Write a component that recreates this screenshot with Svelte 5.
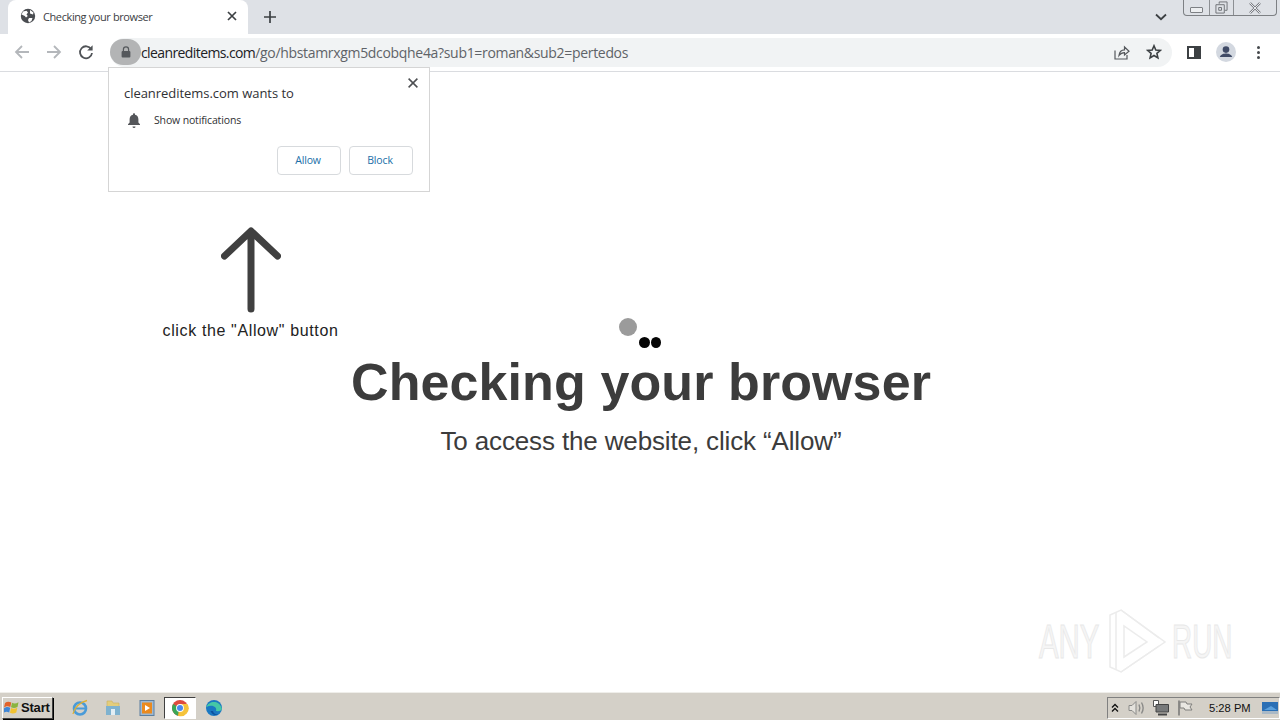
<script>
    let url = { host: "cleanreditems.com", rest: "/go/hbstamrxgm5dcobqhe4a?sub1=roman&sub2=pertedos" };
</script>

<div class="screen">
    <div class="tabstrip">
        <div class="tab">
            <svg class="globe" viewBox="0 0 16 16" width="16" height="16">
                <circle cx="8" cy="8" r="7.2" fill="#4a4d51" />
                <path d="M3 3.5 6.5 2.8 8 4.5 6.5 6.5 7.8 8 6 9.5 4.8 8 1.6 6.5ZM9 10h3.5l-1 3-2.5 1.5-1-2.5ZM10 2l3.5 2.5-.5 2-3-1Z" fill="#fff" />
            </svg>
            <span class="tab-title">Checking your browser</span>
            <svg class="tab-x" viewBox="0 0 10 10" width="10" height="10">
                <path d="M1 1 9 9M9 1 1 9" stroke="#3c4043" stroke-width="1.7" />
            </svg>
        </div>
        <svg class="plus" viewBox="0 0 12 12" width="12" height="12">
            <path d="M6 0V12M0 6H12" stroke="#3c4043" stroke-width="1.7" />
        </svg>
        <svg class="chevron" viewBox="0 0 12 8" width="12" height="8">
            <path d="M1 1.5 6 6.2 11 1.5" fill="none" stroke="#3c4043" stroke-width="1.8" />
        </svg>
        <div class="win-buttons">
            <div class="win-btn min"><span></span></div>
            <div class="win-btn max">
                <svg viewBox="0 0 14 14" width="13" height="13">
                    <path d="M4.5 3V1H13V10H10.5M1 4H10V13H1ZM4 7H7V10H4Z" fill="none" stroke="#6b6e73" />
                </svg>
            </div>
            <div class="win-btn close">
                <svg viewBox="0 0 14 12" width="14" height="12">
                    <path d="M2 1 12 11M12 1 2 11" stroke="#777a7f" stroke-width="2.4" />
                    <path d="M2 1 12 11M12 1 2 11" stroke="#e8eaed" stroke-width="1" />
                </svg>
            </div>
        </div>
    </div>

    <div class="toolbar">
        <svg class="nav" viewBox="0 0 16 16" width="16" height="16">
            <path d="M15 8H2M8 2 2 8l6 6" fill="none" stroke="#b4b7bb" stroke-width="1.8" />
        </svg>
        <svg class="nav" viewBox="0 0 16 16" width="16" height="16">
            <path d="M1 8H14M8 2l6 6-6 6" fill="none" stroke="#b4b7bb" stroke-width="1.8" />
        </svg>
        <svg class="nav reload" viewBox="0 0 16 16" width="16" height="16">
            <path d="M13.2 5.2A6 6 0 1 0 14 9" fill="none" stroke="#505357" stroke-width="1.8" />
            <path d="M14.6 1.2V6.6H9.2Z" fill="#505357" />
        </svg>
        <div class="omnibox">
            <div class="lock-chip">
                <svg viewBox="0 0 10 12" width="10" height="12">
                    <path d="M2.4 5V3.4a2.6 2.6 0 0 1 5.2 0V5" fill="none" stroke="#55585c" stroke-width="1.2" />
                    <rect x=".6" y="5" width="8.8" height="6.6" rx="1" fill="#55585c" />
                </svg>
            </div>
            <span class="url"><span class="host">{url.host}</span><span class="rest">{url.rest}</span></span>
            <svg class="omni-icon" viewBox="0 0 16 16" width="16" height="16">
                <path d="M1 6.5V15H13V11M5 11.5C5.5 7.500 8 5.800 10.500 5.800V3L15 7.300 10.500 11V8.600C8 8.600 6.500 9.500 5 11.500Z" fill="none" stroke="#55585c" stroke-width="1.2" />
            </svg>
            <svg class="omni-icon star" viewBox="0 0 16 16" width="16" height="16">
                <path d="M8 1.800 9.800 6l4.600.4-3.500 3 1 4.500L8 11.500l-3.900 2.400 1-4.500-3.500-3L6.200 6Z" fill="none" stroke="#3c4043" stroke-width="1.6" />
            </svg>
        </div>
        <div class="side-panel"><span></span></div>
        <div class="avatar">
            <svg viewBox="0 0 20 20" width="20" height="20">
                <circle cx="10" cy="10" r="10" fill="#d3d8e0" />
                <circle cx="10" cy="7.600" r="3.300" fill="#3f4a66" />
                <path d="M3.800 15c1-3 4-3.600 6.200-3.600s5.200.6 6.200 3.600Z" fill="#3f4a66" />
            </svg>
        </div>
        <div class="kebab"><i></i><i></i><i></i></div>
    </div>

    <main class="page">
        <div class="prompt">
            <svg class="prompt-x" viewBox="0 0 10 10" width="10" height="10">
                <path d="M.6.6 9.400 9.400M9.400.6.6 9.400" stroke="#4d4f52" stroke-width="1.500" />
            </svg>
            <div class="prompt-title">cleanreditems.com wants to</div>
            <div class="prompt-row">
                <svg viewBox="0 0 14 16" width="14" height="16">
                    <path d="M7 1.200c.6 0 1 .4 1 1v.5c2.200.5 3.400 2.300 3.400 4.500v3.300l1.600 1.700v.8H1v-.8l1.600-1.700V7.200C2.600 5 3.800 3.200 6 2.700v-.5c0-.6.400-1 1-1Z" fill="#54565a" />
                    <path d="M5.500 14.400h3a1.500 1.500 0 0 1-3 0Z" fill="#54565a" />
                </svg>
                <span>Show notifications</span>
            </div>
            <div class="prompt-actions">
                <button>Allow</button>
                <button>Block</button>
            </div>
        </div>

        <div class="hint">
            <svg viewBox="0 0 60 86" width="60" height="86">
                <path d="M30 82V5M3.500 29 30 4 56.500 29" fill="none" stroke="#404040" stroke-width="7" stroke-linecap="round" stroke-linejoin="round" />
            </svg>
            <div class="hint-text">click the "Allow" button</div>
        </div>

        <div class="checking">
            <div class="dots">
                <i class="dot grey"></i>
                <i class="dot black one"></i>
                <i class="dot black two"></i>
            </div>
            <h1>Checking your browser</h1>
            <p>To access the website, click “Allow”</p>
        </div>

        <svg class="watermark" viewBox="0 0 200 66" width="200" height="66">
            <g fill="none" stroke="#ececec" stroke-width="1.500">
                <path d="M73 6V58L84 63 128 33 84 1Z" />
                <path d="M79 3V60M87 17V48L110 33ZM84 1 122 29M84 63 122 37" />
            </g>
            <text transform="translate(2 49) scale(.6 1)" class="wm-text">ANY</text>
            <text transform="translate(135 49) scale(.57 1)" class="wm-text">RUN</text>
        </svg>
    </main>

    <footer class="taskbar">
        <div class="start">
            <svg viewBox="0 0 16 15" width="16" height="15">
                <path d="M1 3C3 1.500 5 1.500 7.300 2.500L6.300 7C4 6 2.500 6 0 7.500Z" fill="#e2632b" />
                <path d="M8 2.800C10 3.700 12 3.700 14.500 2.200L13.500 7C11 8.300 9.200 8.200 7 7.300Z" fill="#8ab440" />
                <path d="M0 8.300C2.500 6.800 4 6.800 6.200 7.800L5.200 12.500C3 11.500 1.500 11.500-1 13Z" fill="#3f86d6" />
                <path d="M7 8.100C9 9 11 9 13.300 7.800L12.300 12.500C10 13.700 8 13.700 6 12.800Z" fill="#f2c230" />
            </svg>
            <span>Start</span>
        </div>
        <div class="quick">
            <svg viewBox="0 0 18 18" width="18" height="18">
                <circle cx="9" cy="9.500" r="6" fill="none" stroke="#4a9bd8" stroke-width="2.600" />
                <path d="M3 9.500H15" stroke="#4a9bd8" stroke-width="2" />
                <path d="M2 15C3 9 9 3 16 1.500" fill="none" stroke="#e0b030" stroke-width="1.300" />
            </svg>
            <svg class="explorer" viewBox="0 0 18 18" width="18" height="18">
                <path d="M3 2h5l1 2h6v4H3Z" fill="#e3cd7c" stroke="#c9b060" stroke-width=".6" />
                <path d="M2 7h14v9H2Z" fill="#7fb2cf" />
                <path d="M7 10h4v6H7Z" fill="#e3eef4" />
            </svg>
            <svg viewBox="0 0 18 18" width="18" height="18">
                <rect x="2" y="1.500" width="14" height="15" fill="#9db9d3" stroke="#5c7f9f" />
                <rect x="4" y="3.500" width="10" height="11" fill="#ea8a1e" />
                <path d="M7 6 12 9 7 12Z" fill="#fff" />
            </svg>
            <div class="active-app">
                <svg viewBox="0 0 18 18" width="18" height="18">
                    <circle cx="9" cy="9" r="8" fill="#de4b3e" />
                    <path d="M9 9 2.100 5A8 8 0 0 0 7 16.800Z" fill="#3aa757" />
                    <path d="M9 5h7.400A8 8 0 0 1 7 16.800Z" fill="#f5c33b" />
                    <circle cx="9" cy="9" r="3.900" fill="#fff" />
                    <circle cx="9" cy="9" r="3" fill="#4a89ee" />
                </svg>
            </div>
            <svg viewBox="0 0 18 18" width="18" height="18">
                <circle cx="9" cy="9" r="8" fill="#1a78c2" />
                <path d="M1.500 8C3 2.500 14 0 16.800 9.500c.3 2-2.500 3-5.800 2.500 1.500-4-4-7-9.500-4Z" fill="#45c8a6" />
                <path d="M5.500 12c1 3 4 5 8 3.500-3 .5-5-1-5.500-3.500Z" fill="#0c4f9c" />
            </svg>
        </div>
        <div class="tray">
            <svg class="tray-up" viewBox="0 0 8 10" width="8" height="10">
                <path d="M1 4.500 4 1.500 7 4.500M1 8.500 4 5.500 7 8.500" fill="none" stroke="#111" stroke-width="1.300" />
            </svg>
            <svg class="tray-sound" viewBox="0 0 18 16" width="18" height="16">
                <path d="M1 5.500H4L8 1.500V14.500L4 10.500H1Z" fill="#e4e2dc" stroke="#8a8a88" />
                <path d="M11 4.500C12.200 7 12.200 9 11 11.500M13.500 2.500C15.600 6 15.600 10 13.500 13.500" fill="none" stroke="#8a8a88" stroke-width="1.400" />
            </svg>
            <svg class="tray-net" viewBox="0 0 18 16" width="18" height="16">
                <path d="M1.500 .5H6.500V6.500H1.500Z" fill="#fff" stroke="#555" />
                <path d="M4 4.500H16.500V12H4Z" fill="#77797a" stroke="#444" />
                <path d="M6 14.500H15" stroke="#444" stroke-width="2" />
            </svg>
            <svg class="tray-flag" viewBox="0 0 16 16" width="16" height="16">
                <path d="M2 .5V15.500" stroke="#666" stroke-width="1.300" />
                <path d="M3 2H9L10 4H15L13 7 15 10H8L7 8H3Z" fill="#e9e7e2" stroke="#7f7f7c" />
            </svg>
            <span class="clock">5:28 PM</span>
            <svg class="show-desktop" viewBox="0 0 16 12" width="16" height="12">
                <rect width="16" height="12" fill="#2a6fb5" />
                <rect y="9" width="16" height="3" fill="#aab9c6" />
                <path d="M2 8 9 4 15 8" fill="#5aa0dd" />
            </svg>
        </div>
    </footer>
</div>

<style>
    :global(body) {
        margin: 0;
        background: #fff;
    }

    .screen {
        width: 1280px;
        height: 720px;
        display: flex;
        flex-direction: column;
        overflow: hidden;
        font-family: "Open Sans", "Liberation Sans", sans-serif;
        color: #3c4043;
    }

    .tabstrip {
        height: 34px;
        flex: none;
        display: flex;
        align-items: flex-start;
        background: #dee1e6;
        box-sizing: border-box;
        padding-left: 8px;
    }

    .tab {
        width: 240px;
        height: 34px;
        box-sizing: border-box;
        padding: 0 11px 2px 12px;
        display: flex;
        align-items: center;
        background: #fff;
        border-radius: 8px 8px 0 0;
    }

    .globe {
        flex: none;
    }

    .tab-title {
        flex: 1;
        margin-left: 7px;
        font-size: 11px;
        letter-spacing: -0.4px;
        white-space: nowrap;
    }

    .plus {
        margin: 11px 0 0 16px;
    }

    .chevron {
        margin: 13px 0 0 879px;
    }

    .win-buttons {
        display: flex;
        height: 16px;
        margin-left: 16px;
        box-sizing: border-box;
        border: 1px solid #7d8084;
        border-top: none;
        border-radius: 0 0 4px 4px;
    }

    .win-btn {
        display: flex;
        align-items: center;
        justify-content: center;
        box-sizing: border-box;
        border-right: 1px solid #8c8f93;
    }

    .min {
        width: 26px;
    }

    .min span {
        display: block;
        width: 11px;
        height: 4px;
        margin-top: 5px;
        border: 1px solid #7d8084;
        border-radius: 1px;
        background: #eceef0;
    }

    .max {
        width: 24px;
    }

    .close {
        width: 42px;
        border-right: none;
    }

    .toolbar {
        height: 38px;
        flex: none;
        display: flex;
        align-items: center;
        box-sizing: border-box;
        padding: 0 0 1px 14px;
        background: #fff;
        border-bottom: 1px solid #dadce0;
    }

    .nav {
        margin-right: 16px;
        flex: none;
    }

    .omnibox {
        width: 1062px;
        height: 29px;
        flex: none;
        display: flex;
        align-items: center;
        box-sizing: border-box;
        background: #f1f3f4;
        border-radius: 15px;
    }

    .lock-chip {
        width: 31px;
        height: 26px;
        flex: none;
        display: flex;
        align-items: center;
        justify-content: center;
        background: #b3b4b5;
        border-radius: 13px;
    }

    .url {
        flex: 1;
        font-size: 14px;
        letter-spacing: -0.32px;
        white-space: nowrap;
    }

    .host {
        color: #202124;
        letter-spacing: -0.6px;
    }

    .rest {
        color: #5f6368;
    }

    .omni-icon {
        flex: none;
        margin-right: 16px;
    }

    .star {
        margin-right: 10px;
    }

    .side-panel {
        width: 14px;
        height: 13px;
        margin-left: 15px;
        flex: none;
        box-sizing: border-box;
        border: 2px solid #3c4043;
        display: flex;
        justify-content: flex-end;
    }

    .side-panel span {
        width: 5px;
        background: #3c4043;
    }

    .avatar {
        width: 20px;
        height: 20px;
        margin-left: 15px;
        flex: none;
    }

    .kebab {
        margin-left: 21px;
        display: flex;
        flex-direction: column;
        gap: 2px;
    }

    .kebab i {
        width: 3px;
        height: 3px;
        border-radius: 50%;
        background: #45484c;
    }

    .page {
        flex: 1;
        position: relative;
        background: #fff;
    }

    .prompt {
        position: absolute;
        left: 108px;
        top: -5px;
        width: 322px;
        height: 125px;
        box-sizing: border-box;
        padding: 16px 15px 0;
        background: #fff;
        border: 1px solid #d5d5d5;
    }

    .prompt-x {
        position: absolute;
        right: 11px;
        top: 10px;
    }

    .prompt-title {
        font-size: 13px;
        letter-spacing: -0.04px;
        color: #303134;
    }

    .prompt-row {
        display: flex;
        align-items: center;
        gap: 13px;
        margin-top: 10px;
        padding-left: 3px;
        font-size: 10.500px;
        letter-spacing: -0.15px;
        color: #303134;
    }

    .prompt-actions {
        display: flex;
        justify-content: flex-end;
        gap: 8px;
        margin: 18px 1px 0 0;
    }

    .prompt-actions button {
        width: 64px;
        height: 29px;
        padding: 0 2px 2px 0;
        font: inherit;
        font-size: 10.500px;
        letter-spacing: -0.15px;
        color: #1a6fa8;
        background: #fff;
        border: 1px solid #d7dadd;
        border-radius: 4px;
    }

    .hint {
        position: absolute;
        left: 140px;
        top: 155px;
        width: 221px;
        display: flex;
        flex-direction: column;
        align-items: center;
        font-family: "Liberation Sans", Arial, sans-serif;
    }

    .hint-text {
        margin-top: 9px;
        font-size: 16px;
        letter-spacing: 0.63px;
        color: #222;
        white-space: nowrap;
    }

    .checking {
        padding: 246px 0 0 2px;
        display: flex;
        flex-direction: column;
        align-items: center;
        font-family: "Liberation Sans", Arial, sans-serif;
        color: #3c3c3c;
    }

    .dots {
        position: relative;
        width: 44px;
        height: 32px;
    }

    .dot {
        position: absolute;
        border-radius: 50%;
    }

    .grey {
        left: 0;
        top: 0;
        width: 18px;
        height: 18px;
        background: #9b9b9b;
    }

    .black {
        top: 19px;
        width: 11px;
        height: 11px;
        background: #050505;
    }

    .one {
        left: 20px;
    }

    .two {
        left: 32px;
        width: 10px;
    }

    h1 {
        margin: 2px 0 0;
        font-size: 52px;
        line-height: 60px;
        font-weight: 700;
        letter-spacing: 0.1px;
    }

    p {
        margin: 14px 0 0;
        font-size: 26px;
        line-height: 30px;
        letter-spacing: -0.14px;
    }

    .watermark {
        position: absolute;
        left: 1037px;
        top: 537px;
    }

    .wm-text {
        font-family: "Liberation Sans", Arial, sans-serif;
        font-size: 49px;
        fill: #f5f5f5;
        stroke: #e8e8e8;
        stroke-width: 1;
    }

    .taskbar {
        height: 28px;
        flex: none;
        display: flex;
        align-items: center;
        box-sizing: border-box;
        padding: 2px 0 0 2px;
        background: #d4d0c8;
        border-top: 1px solid #efeeea;
    }

    .start {
        width: 51px;
        height: 22px;
        box-sizing: border-box;
        display: flex;
        align-items: center;
        gap: 1px;
        padding-left: 1px;
        background: #d4d0c8;
        border: 1px solid;
        border-color: #fff #404040 #404040 #fff;
        box-shadow: 1px 1px 0 #000;
        font-family: "Liberation Sans", Arial, sans-serif;
        font-size: 13px;
        font-weight: 700;
        letter-spacing: -0.2px;
        color: #111;
    }

    .quick {
        display: flex;
        align-items: center;
        gap: 16px;
        margin-left: 18px;
        flex: 1;
    }

    .explorer {
        margin-left: -1px;
    }

    .active-app {
        width: 32px;
        height: 22px;
        margin: 0 -7px 0 -8px;
        box-sizing: border-box;
        display: flex;
        align-items: center;
        justify-content: center;
        background: #fff;
        border: 1px solid;
        border-color: #404040 #fff #fff #404040;
    }

    .tray {
        width: 173px;
        height: 22px;
        box-sizing: border-box;
        display: flex;
        align-items: center;
        padding-left: 3px;
        border: 1px solid;
        border-color: #808080 #fff #fff #808080;
    }

    .tray-sound {
        margin-left: 9px;
    }

    .tray-net {
        margin-left: 6px;
    }

    .tray-flag {
        margin-left: 7px;
    }

    .clock {
        margin-left: 16px;
        font-family: "Liberation Sans", Arial, sans-serif;
        font-size: 11.200px;
        color: #111;
        white-space: nowrap;
    }

    .show-desktop {
        margin-left: 11px;
        flex: none;
    }
</style>
